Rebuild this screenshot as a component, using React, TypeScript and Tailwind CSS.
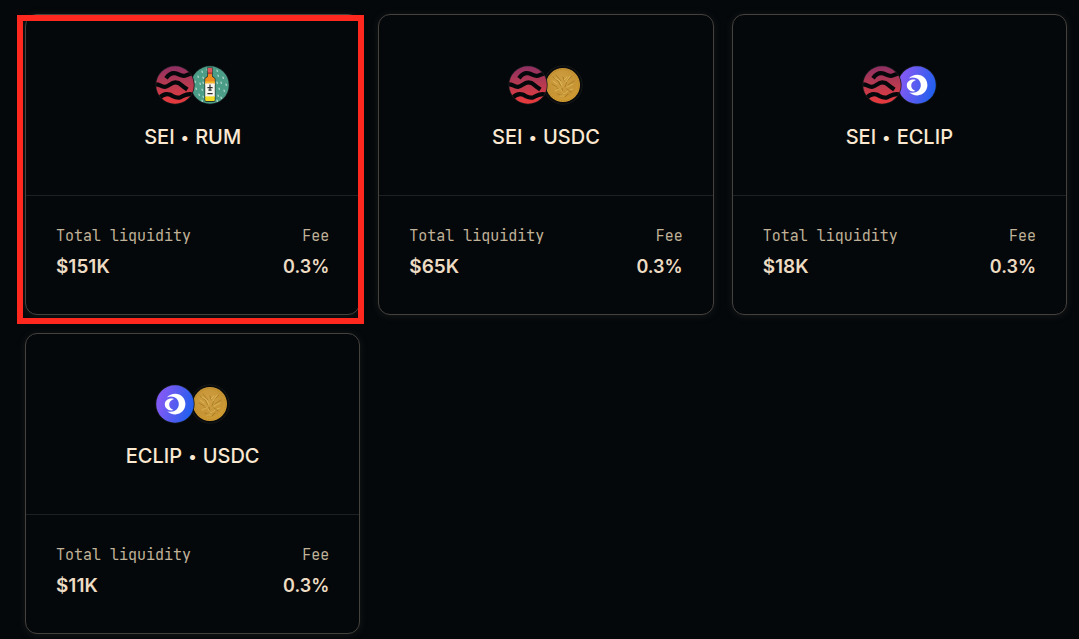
import React, { useId } from "react";

type Token = "SEI" | "RUM" | "USDC" | "ECLIP";

interface Pool {
  base: Token;
  quote: Token;
  liquidity: string;
  fee: string;
  highlighted?: boolean;
}

const pools: Pool[] = [
  { base: "SEI", quote: "RUM", liquidity: "$151K", fee: "0.3%", highlighted: true },
  { base: "SEI", quote: "USDC", liquidity: "$65K", fee: "0.3%" },
  { base: "SEI", quote: "ECLIP", liquidity: "$18K", fee: "0.3%" },
  { base: "ECLIP", quote: "USDC", liquidity: "$11K", fee: "0.3%" },
];

function SeiIcon() {
  const id = useId();
  return (
    <svg viewBox="0 0 40 40" className="size-10" aria-hidden="true">
      <defs>
        <linearGradient id={id} x1="0" y1="0" x2="0" y2="1">
          <stop offset="0" stopColor="#8e2f62" />
          <stop offset="0.5" stopColor="#b93a50" />
          <stop offset="1" stopColor="#ea3a3c" />
        </linearGradient>
        <clipPath id={id + "c"}>
          <circle cx="20" cy="20" r="19" />
        </clipPath>
      </defs>
      <circle cx="20" cy="20" r="19.6" fill="#171b1e" />
      <circle cx="20" cy="20" r="18.8" fill={`url(#${id})`} />
      <g clipPath={`url(#${id}c)`} fill="none" stroke="#04080a" strokeWidth="4.2">
        <path d="M11 13.2C13.5 9.8 16.5 7.4 20.5 8.3C24.5 9.2 26 11.6 30 10.8C33 10.2 34.5 8 39 8.4" />
        <path d="M0 19.4C4 18.5 5.5 21.8 10 21.8C14.5 21.4 15.5 17.4 20.3 17.4C25 17.4 26 20 28.5 21.7L32.4 24.4" />
        <path d="M4 33.5C7.5 29.5 10.5 28.3 14.5 29.6C18.5 31 21 33.8 25.5 32.2C29.5 30.6 31.5 27.8 38 29.5" />
      </g>
    </svg>
  );
}

function RumIcon() {
  const drops = [
    [12, 6], [17, 4], [27, 5], [8, 11], [13, 12], [28, 10], [33, 12], [5, 16], [10, 18],
    [13, 17], [27, 17], [31, 17], [36, 19], [6, 23], [12, 24], [29, 23], [34, 25],
    [9, 29], [13, 31], [28, 30], [31, 32], [12, 35], [27, 35],
  ];
  return (
    <svg viewBox="0 0 40 40" className="size-10" aria-hidden="true">
      <circle cx="20" cy="20" r="19.6" fill="#171b1e" />
      <circle cx="20" cy="20" r="18.8" fill="#4b9d87" />
      <g stroke="#c3e3d6" strokeWidth="1.1" strokeLinecap="round">
        {drops.map(([x, y]) => (
          <path key={`${x}-${y}`} d={`M${x} ${y}l.3 1.4`} />
        ))}
      </g>
      <path d="M17.3 2.6h5.4v8.4l2.8 2.4v21.6q0 2-2 2h-7q-2 0-2-2V13.4l2.8-2.4z" fill="#26342d" />
      <path d="M17.8 3h4.4v4.6h-4.4z" fill="#e0555c" />
      <path d="M18 7.4h4v4l2.8 2.4V20h-9.6v-6.2l2.8-2.4z" fill="#f08a1c" />
      <path d="M18 7.4h4v1.8h-4z" fill="#b8383c" />
      <path d="M15.2 31h9.6v4q0 1-1 1h-7.6q-1 0-1-1z" fill="#f2dc22" />
      <path d="M15.2 16.4h9.6v2h-9.6z" fill="#f5b92c" />
      <path d="M15.2 18.4h9.6v13h-9.6z" fill="#f8f6ee" />
      <path d="M20 19.6v6M17.4 22.6h5.2M18.4 25.2h3.2M17.4 28.6h5.2" stroke="#292d2b" strokeWidth="1.2" fill="none" />
    </svg>
  );
}

function UsdcIcon() {
  const id = useId();
  return (
    <svg viewBox="0 0 40 40" className="size-10" aria-hidden="true">
      <defs>
        <radialGradient id={id} cx="0.45" cy="0.4" r="0.65">
          <stop offset="0" stopColor="#cfa044" />
          <stop offset="0.65" stopColor="#c69434" />
          <stop offset="1" stopColor="#d8a232" />
        </radialGradient>
      </defs>
      <circle cx="20" cy="20" r="19.2" fill="#07090b" stroke="#17191a" strokeWidth="1" />
      <circle cx="20" cy="20" r="17" fill={`url(#${id})`} />
      <circle cx="20" cy="20" r="15.6" fill="none" stroke="#b07f26" strokeWidth="0.7" strokeDasharray="1.5 1" />
      <g fill="none" strokeWidth="1" strokeLinecap="round" strokeLinejoin="round" opacity="0.6">
        <path d="M10 12l5 4 3 5M13 10l5 6M29 11l-5 5-2 6M31 16l-6 4M14 24l5-1 1 5M24 24l4 3M9 19l5 3M20 12l1 4M15 29l4 2M25 29l-3 3" stroke="#9b6e1c" />
        <path d="M12 13l5 3 2 5M27 11l-4 6M30 19l-6 3M12 26l6-3M18 25l3 4 4-3M24 12l-3 3M10 16l4 3M17 31h4M30 24l-3 1" stroke="#ebc866" />
      </g>
    </svg>
  );
}

function EclipIcon() {
  const id = useId();
  return (
    <svg viewBox="0 0 40 40" className="size-10" aria-hidden="true">
      <defs>
        <linearGradient id={id} x1="0" y1="0.35" x2="1" y2="0.65">
          <stop offset="0.1" stopColor="#805af5" />
          <stop offset="0.5" stopColor="#565cf0" />
          <stop offset="1" stopColor="#1c60ef" />
        </linearGradient>
      </defs>
      <circle cx="20" cy="20" r="19.6" fill="#171b1e" />
      <circle cx="20" cy="20" r="18.8" fill={`url(#${id})`} />
      <path
        d="M11.8 13.4C14.2 11 17 9.8 20.2 9.8C26 9.8 30.4 14.4 30.4 20.1C30.4 25.9 26 30.4 20.4 30.4C17 30.4 14.2 29.4 12.2 27.3C18 29.2 23.8 26 23.8 20.1C23.8 14.3 18 11 11.8 13.4Z"
        fill="#fff"
      />
      <path
        d="M19 14.9C14 13.4 9.8 16.3 9.8 20.3C9.8 24.4 14 27.6 18.6 26C15.6 24.8 14.2 22.8 14.2 20.4C14.2 18 15.9 15.8 19 14.9Z"
        fill="#fff"
      />
    </svg>
  );
}

const icons: Record<Token, () => React.JSX.Element> = {
  SEI: SeiIcon,
  RUM: RumIcon,
  USDC: UsdcIcon,
  ECLIP: EclipIcon,
};

function PoolCard({ base, quote, liquidity, fee, highlighted }: Pool) {
  const BaseIcon = icons[base];
  const QuoteIcon = icons[quote];
  return (
    <article className="relative rounded-xl border border-[#45423e] bg-[#04080b] shadow-[0_1px_8px_rgba(120,110,90,0.16)]">
      <header className="flex flex-col items-center border-b border-[#1e2123] px-8 pt-[50px] pb-11">
        <div className="flex -space-x-[5px]">
          <div className="relative z-10">
            <BaseIcon />
          </div>
          <QuoteIcon />
        </div>
        <h2 className="mt-[18px] flex items-center gap-1.5 text-xl leading-7 font-medium text-[#fbe9d2]">
          <span>{base}</span>
          <span className="text-base leading-7">•</span>
          <span>{quote}</span>
        </h2>
      </header>
      <dl className="flex justify-between px-[30px] pt-7 pb-8">
        <div>
          <dt className="font-['JetBrains_Mono','Liberation_Mono',monospace] text-[15px] leading-6 text-[#c1b399]">
            Total liquidity
          </dt>
          <dd className="mt-1 text-[19px] leading-[30px] font-semibold text-[#eddcc3]">{liquidity}</dd>
        </div>
        <div className="text-right">
          <dt className="font-['JetBrains_Mono','Liberation_Mono',monospace] text-[15px] leading-6 text-[#c1b399]">
            Fee
          </dt>
          <dd className="mt-1 text-lg leading-[30px] font-semibold text-[#eddcc3]">{fee}</dd>
        </div>
      </dl>
      {highlighted && (
        <div className="pointer-events-none absolute top-0 -right-[5px] -bottom-[10px] -left-[9px] z-20 border-6 border-[#ff281e]" />
      )}
    </article>
  );
}

export default function App() {
  return (
    <main className="min-h-screen bg-[#04080b] pt-3.5 pr-3 pb-1 pl-[25px] font-['Inter',sans-serif]">
      <div className="grid grid-cols-3 gap-[18px]">
        {pools.map((pool) => (
          <PoolCard key={`${pool.base}-${pool.quote}`} {...pool} />
        ))}
      </div>
    </main>
  );
}
